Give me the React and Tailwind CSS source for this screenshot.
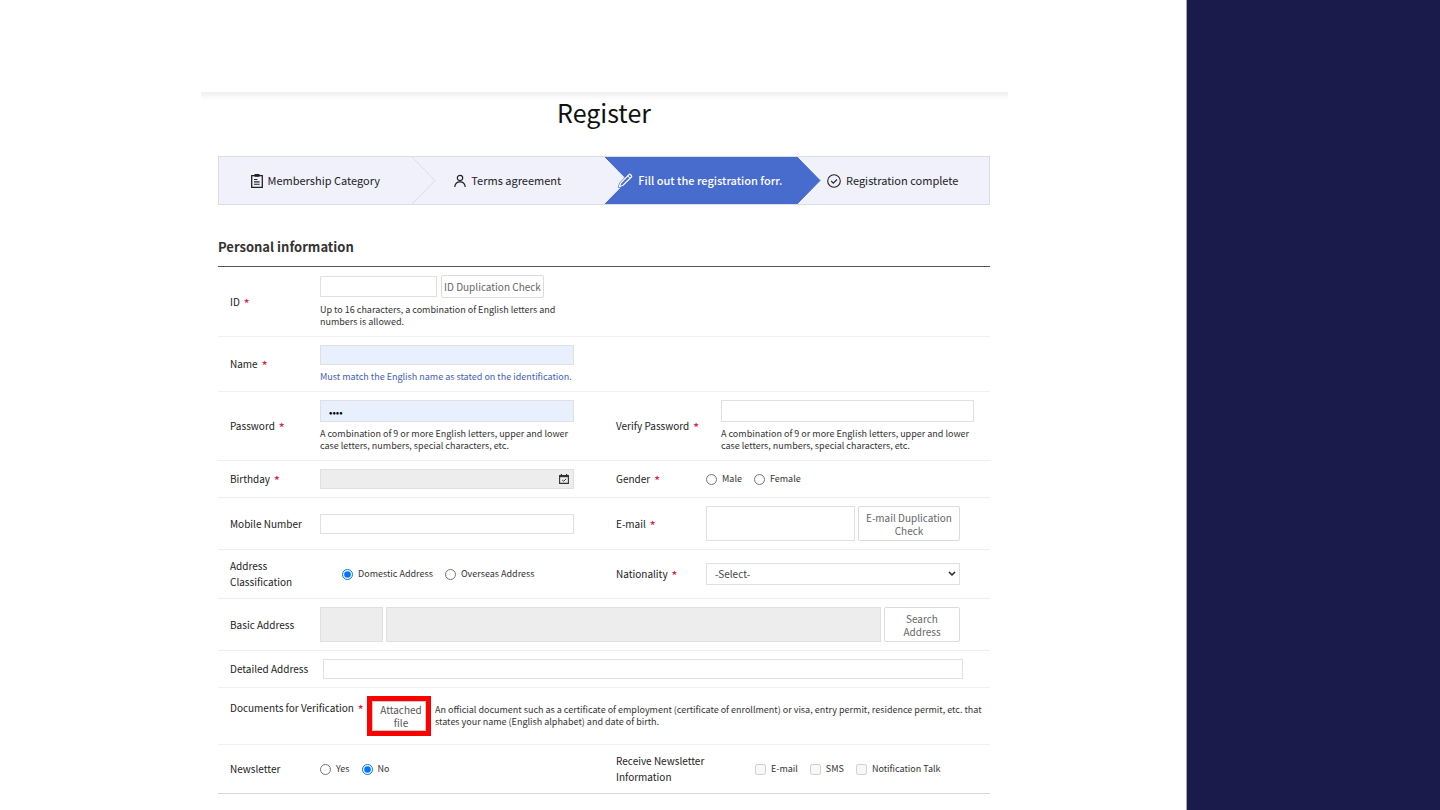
import React, { useState } from 'react';

const inputStyle = 'block border border-[#e0e0e0] px-2 text-[10px] outline-none';
const buttonStyle =
  'rounded-[2px] border border-[#dcdcdc] bg-white text-center text-[10px] leading-[13px] text-[#666]';

const ClipboardIcon = () => (
  <svg viewBox="0 0 12 14" className="h-[14px] w-[12px]" fill="none" stroke="currentColor">
    <path d="M.7 1.7h10.6v11.6H.7z" strokeWidth="1.3" />
    <path d="M3.5 0h5v2.8h-5z" fill="currentColor" stroke="none" />
    <path d="M3 5.5h3.4M3 7.9h5.6M3 10.3h5.6" strokeWidth="1.1" />
  </svg>
);

const UserIcon = () => (
  <svg viewBox="0 0 12 14" className="h-[14px] w-[12px]" fill="none" stroke="currentColor" strokeWidth="1.2">
    <circle cx="6" cy="4" r="2.7" />
    <path d="M.8 13c.2-3.4 2.2-5.2 5.2-5.2s5 1.8 5.2 5.2" />
  </svg>
);

const PencilIcon = () => (
  <svg viewBox="0 0 15 15" className="size-[15px]" strokeLinejoin="round">
    <path
      d="M1.2 13.8l1.6-3.8L11 1.6c.5-.5 1-.5 1.5 0l.9.9c.5.5.5 1 0 1.5l-8.4 8.2z"
      fill="#486bce"
      stroke="#486bce"
      strokeWidth="2.4"
    />
    <path
      d="M1.2 13.8l1.6-3.8L11 1.6c.5-.5 1-.5 1.5 0l.9.9c.5.5.5 1 0 1.5l-8.4 8.2z"
      fill="none"
      stroke="#fff"
      strokeWidth="1.2"
    />
    <path d="M9.8 3l2.3 2.2" stroke="#fff" />
  </svg>
);

const CheckCircleIcon = () => (
  <svg viewBox="0 0 14 14" className="size-[14px]" fill="none" stroke="currentColor" strokeWidth="1.1">
    <circle cx="7" cy="7" r="6.3" />
    <path d="M4.2 7l2.1 2.1 3.6-3.6" />
  </svg>
);

const CalendarIcon = () => (
  <svg viewBox="0 0 10 10" className="size-[10px]" fill="none" stroke="#333">
    <path d="M.6 1.6h8.8v7.8H.6z" strokeWidth="1.1" />
    <path d="M.6 1h8.8v2.2H.6z" fill="#333" stroke="none" />
    <path d="M2.4 0v2M7.6 0v2" strokeWidth="1.2" />
    <path d="M3.2 6l1.4 1.3L7 4.9" strokeWidth="1" />
  </svg>
);

function Arrow({ fill, stroke }) {
  return (
    <svg
      viewBox="0 0 24 48"
      preserveAspectRatio="none"
      className="absolute top-0 left-full z-10 h-full w-6"
    >
      <path d="M0 0L23 24L0 48" fill={fill} stroke={stroke} />
    </svg>
  );
}

const steps = [
  { label: 'Membership Category', icon: <ClipboardIcon />, fill: '#f1f1fc', stroke: '#dcdce8' },
  { label: 'Terms agreement', icon: <UserIcon />, fill: '#f1f1fc', stroke: '#f1f1fc' },
  {
    label: 'Fill out the registration forr.',
    icon: <PencilIcon />,
    fill: '#486bce',
    stroke: '#486bce',
    active: true,
  },
  { label: 'Registration complete', icon: <CheckCircleIcon /> },
];

function Steps() {
  return (
    <ol className="mt-[27px] grid grid-cols-4 border border-[#dcdce8] bg-[#f1f1fc]">
      {steps.map((step) => (
        <li
          key={step.label}
          className={`relative flex h-[47px] items-center justify-center text-[11px] whitespace-nowrap ${
            step.active ? 'bg-[#486bce] font-medium text-white' : 'text-[#222]'
          }`}
        >
          <span className="relative z-20 flex items-center gap-[5px]">
            {step.icon}
            {step.label}
          </span>
          {step.fill && <Arrow fill={step.fill} stroke={step.stroke} />}
        </li>
      ))}
    </ol>
  );
}

function Row({ children, last }) {
  return (
    <div className={`grid auto-cols-fr grid-flow-col ${last ? '' : 'border-b border-[#efefef]'}`}>{children}</div>
  );
}

function Field({ label, id, required, width = 'w-[90px]', top, pad = 'pr-[30px]', children }) {
  return (
    <div className={`flex items-center py-2 pl-3 ${pad}`}>
      <label
        htmlFor={id}
        className={`${width} shrink-0 text-[10px] leading-4 text-[#222] ${top ? 'self-start pt-1' : ''}`}
      >
        {label}
        {required && <span className="ml-1 align-middle text-[12px] leading-none font-medium text-[#e02040]">*</span>}
      </label>
      <div className="min-w-0 flex-1">{children}</div>
    </div>
  );
}

const Help = ({ children, color = 'text-[#333]' }) => (
  <p className={`mt-[6px] text-[9px] leading-3 whitespace-nowrap ${color}`}>{children}</p>
);

const passwordHelp = (
  <>
    A combination of 9 or more English letters, upper and lower
    <br />
    case letters, numbers, special characters, etc.
  </>
);

function Choice({ type = 'radio', label, ...props }) {
  return (
    <label className="flex items-center gap-[5px] text-[9px] leading-4 whitespace-nowrap text-[#333]">
      <input type={type} className="size-[11px] accent-[#0075ff]" {...props} />
      {label}
    </label>
  );
}

export default function App() {
  const [address, setAddress] = useState('domestic');
  const [newsletter, setNewsletter] = useState('no');

  return (
    <div className="flex min-h-screen bg-white font-['Noto_Sans_CJK_KR','Noto_Sans',sans-serif]">
      <main className="min-w-0 flex-1 pt-[92px] pr-[178px] pl-[201px]">
        <div className="h-2 bg-linear-to-b from-[#efefef] to-white" />
        <div className="pr-[18px] pl-[17px]">
          <h1 className="-mt-[5px] text-center text-[25px] leading-[34px] text-[#111]">Register</h1>
          <Steps />

          <h2 className="mt-8 text-[13px] leading-5 font-bold text-[#333]">Personal information</h2>
          <form className="mt-[9px] border-t border-b border-t-[#555] border-b-[#d8d8d8]">
            <Row>
              <Field label="ID" id="userId" required>
                <div className="flex items-center gap-1">
                  <input id="userId" className={`${inputStyle} h-[21px] w-[117px]`} />
                  <button type="button" className={`${buttonStyle} h-[23px] w-[103px] whitespace-nowrap`}>
                    ID Duplication Check
                  </button>
                </div>
                <Help>
                  Up to 16 characters, a combination of English letters and
                  <br />
                  numbers is allowed.
                </Help>
              </Field>
              <div />
            </Row>

            <Row>
              <Field label="Name" id="name" required>
                <input id="name" className={`${inputStyle} h-5 w-full bg-[#e8f0fe]`} />
                <Help color="text-[#4460b8]">Must match the English name as stated on the identification.</Help>
              </Field>
              <div />
            </Row>

            <Row>
              <Field label="Password" id="password" required>
                <input
                  id="password"
                  type="password"
                  defaultValue="abcd"
                  className={`${inputStyle} h-[22px] w-full bg-[#e8f0fe]`}
                />
                <Help>{passwordHelp}</Help>
              </Field>
              <Field label="Verify Password" id="verify" required width="w-[105px]" pad="pr-4">
                <input id="verify" type="password" className={`${inputStyle} h-[22px] w-full`} />
                <Help>{passwordHelp}</Help>
              </Field>
            </Row>

            <Row>
              <Field label="Birthday" id="birthday" required>
                <div className="flex h-5 items-center border border-[#e0e0e0] bg-[#ededed] pr-1">
                  <input id="birthday" readOnly className="min-w-0 flex-1 px-2 text-[10px] outline-none" />
                  <CalendarIcon />
                </div>
              </Field>
              <Field label="Gender" required>
                <div className="flex gap-3">
                  <Choice name="gender" label="Male" />
                  <Choice name="gender" label="Female" />
                </div>
              </Field>
            </Row>

            <Row>
              <Field label="Mobile Number" id="mobile">
                <input id="mobile" type="tel" className={`${inputStyle} h-5 w-full`} />
              </Field>
              <Field label="E-mail" id="email" required>
                <div className="flex gap-[3px]">
                  <input id="email" type="email" className={`${inputStyle} h-[35px] min-w-0 flex-1`} />
                  <button type="button" className={`${buttonStyle} w-[102px]`}>
                    E-mail Duplication
                    <br />
                    Check
                  </button>
                </div>
              </Field>
            </Row>

            <Row>
              <Field label="Address Classification" pad="pr-0">
                <div className="flex gap-3 pl-[22px]">
                  <Choice
                    name="address"
                    label="Domestic Address"
                    checked={address === 'domestic'}
                    onChange={() => setAddress('domestic')}
                  />
                  <Choice
                    name="address"
                    label="Overseas Address"
                    checked={address === 'overseas'}
                    onChange={() => setAddress('overseas')}
                  />
                </div>
              </Field>
              <Field label="Nationality" id="nationality" required>
                <div className="relative">
                  <select
                    id="nationality"
                    className="block h-[22px] w-full appearance-none border border-[#e0e0e0] bg-white px-2 text-[10px] leading-5 text-[#444]"
                  >
                    <option>-Select-</option>
                  </select>
                  <svg
                    viewBox="0 0 8 6"
                    className="pointer-events-none absolute top-2 right-1 h-[6px] w-2"
                    fill="none"
                    stroke="#222"
                    strokeWidth="1.5"
                  >
                    <path d="M1 1l3 3 3-3" />
                  </svg>
                </div>
              </Field>
            </Row>

            <Row>
              <Field label="Basic Address" id="zip">
                <div className="flex gap-[3px]">
                  <input id="zip" readOnly className={`${inputStyle} h-[35px] w-[63px] bg-[#ededed]`} />
                  <input
                    aria-label="Basic address line"
                    readOnly
                    className={`${inputStyle} h-[35px] min-w-0 flex-1 bg-[#ededed]`}
                  />
                  <button type="button" className={`${buttonStyle} w-[76px]`}>
                    Search
                    <br />
                    Address
                  </button>
                </div>
              </Field>
            </Row>

            <Row>
              <Field label="Detailed Address" id="detail" width="w-[93px]" pad="pr-[27px]">
                <input id="detail" className={`${inputStyle} h-5 w-full`} />
              </Field>
            </Row>

            <Row>
              <Field label="Documents for Verification" id="attach" required top width="w-[137px]" pad="pr-2">
                <div className="flex items-center gap-1">
                  <div className="shrink-0 border-[5px] border-[#ff0000]">
                    <button
                      id="attach"
                      type="button"
                      className="block h-[30px] w-[54px] border border-[#ccc] pl-1 text-center text-[10px] leading-[13px] text-[#555]"
                    >
                      Attached
                      <br />
                      file
                    </button>
                  </div>
                  <p className="text-[9px] leading-3 text-[#333]">
                    An official document such as a certificate of employment (certificate of enrollment) or visa, entry
                    permit, residence permit, etc. that
                    <br />
                    states your name (English alphabet) and date of birth.
                  </p>
                </div>
              </Field>
            </Row>

            <Row last>
              <Field label="Newsletter">
                <div className="flex gap-3">
                  <Choice
                    name="newsletter"
                    label="Yes"
                    checked={newsletter === 'yes'}
                    onChange={() => setNewsletter('yes')}
                  />
                  <Choice
                    name="newsletter"
                    label="No"
                    checked={newsletter === 'no'}
                    onChange={() => setNewsletter('no')}
                  />
                </div>
              </Field>
              <Field label="Receive Newsletter Information" width="w-[100px]">
                <div className="flex gap-3 pl-[39px]">
                  <Choice type="checkbox" label="E-mail" disabled />
                  <Choice type="checkbox" label="SMS" disabled />
                  <Choice type="checkbox" label="Notification Talk" disabled />
                </div>
              </Field>
            </Row>
          </form>
        </div>
      </main>
      <aside className="w-[254px] shrink-0 border-l border-[#a3a8b8] bg-[#1a1a4b]" />
    </div>
  );
}
